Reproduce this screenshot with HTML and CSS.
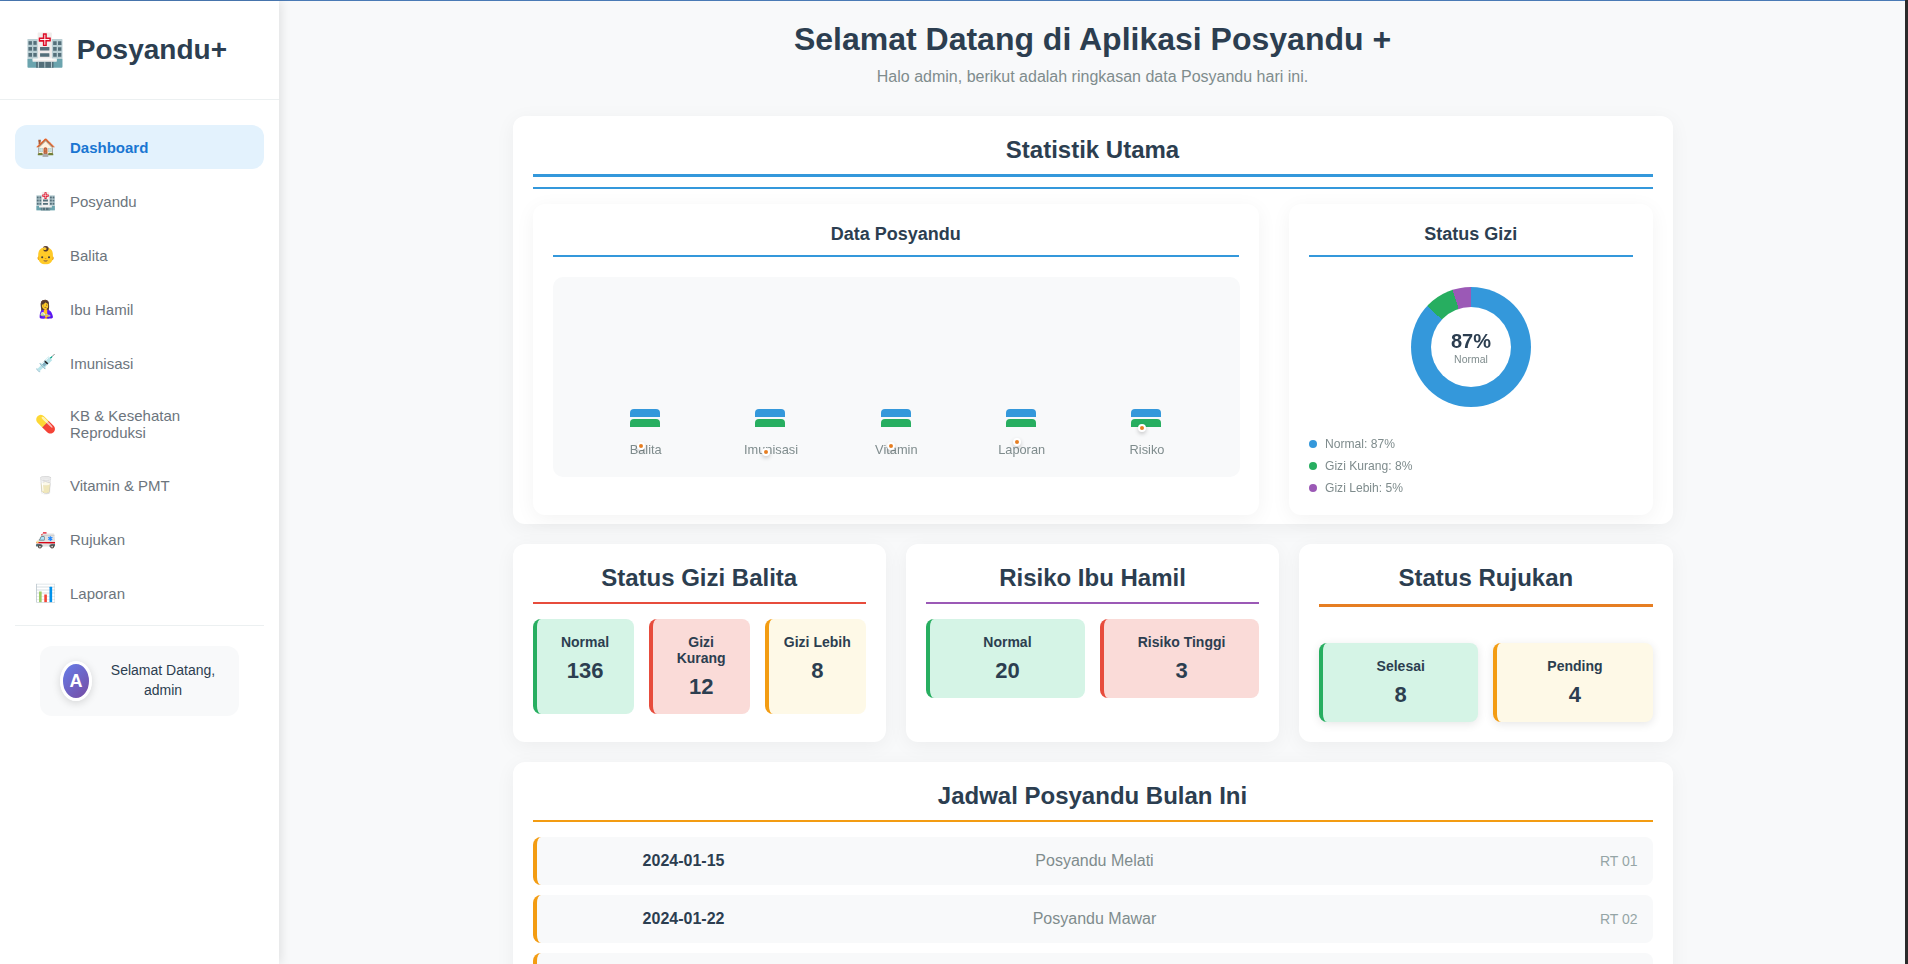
FILE: index.html

```html
<!DOCTYPE html>
<html lang="id">
<head>
  <meta charset="UTF-8">
  <meta name="viewport" content="width=device-width, initial-scale=1.0">
  <title>Dashboard | Posyandu+</title>
  <link rel="stylesheet" href="styles.css">
</head>
<body>
  <div class="page">
    <div class="top-line"></div>
    <div class="app">
      <aside class="sidebar">
        <div class="brand">
          <span class="brand-icon">🏥</span>
          <span class="brand-name">Posyandu+</span>
        </div>
        <nav class="nav">
          <a class="nav-item active"><span class="nav-icon">🏠</span><span>Dashboard</span></a>
          <a class="nav-item"><span class="nav-icon">🏥</span><span>Posyandu</span></a>
          <a class="nav-item"><span class="nav-icon">👶</span><span>Balita</span></a>
          <a class="nav-item"><span class="nav-icon">🤱</span><span>Ibu Hamil</span></a>
          <a class="nav-item"><span class="nav-icon">💉</span><span>Imunisasi</span></a>
          <a class="nav-item"><span class="nav-icon">💊</span><span>KB &amp; Kesehatan Reproduksi</span></a>
          <a class="nav-item"><span class="nav-icon">🥛</span><span>Vitamin &amp; PMT</span></a>
          <a class="nav-item"><span class="nav-icon">🚑</span><span>Rujukan</span></a>
          <a class="nav-item"><span class="nav-icon">📊</span><span>Laporan</span></a>
        </nav>
        <div class="user-wrap">
          <div class="user-card">
            <div class="avatar">A</div>
            <div class="user-text">Selamat Datang, admin</div>
          </div>
        </div>
      </aside>

      <main class="main">
        <div class="container">
          <header class="page-head">
            <h1>Selamat Datang di Aplikasi Posyandu +</h1>
            <p>Halo admin, berikut adalah ringkasan data Posyandu hari ini.</p>
          </header>

          <section class="card card-stats">
            <h2 class="title title-blue">Statistik Utama</h2>
            <div class="rule"></div>
            <div class="chart-grid">
              <div class="card inner">
                <h3 class="sub-title">Data Posyandu</h3>
                <div class="bar-chart">
                  <div class="bar-col"><div class="bar blue"></div><div class="bar green"></div><span class="bar-label">Balita</span></div>
                  <div class="bar-col"><div class="bar blue"></div><div class="bar green"></div><span class="bar-label">Imunisasi</span></div>
                  <div class="bar-col"><div class="bar blue"></div><div class="bar green"></div><span class="bar-label">Vitamin</span></div>
                  <div class="bar-col"><div class="bar blue"></div><div class="bar green"></div><span class="bar-label">Laporan</span></div>
                  <div class="bar-col"><div class="bar blue"></div><div class="bar green"></div><span class="bar-label">Risiko</span></div>
                  <span class="dot" style="left:88px;top:169px"></span>
                  <span class="dot" style="left:213px;top:175px"></span>
                  <span class="dot" style="left:338px;top:169px"></span>
                  <span class="dot" style="left:464px;top:165px"></span>
                  <span class="dot" style="left:589px;top:151px"></span>
                </div>
              </div>
              <div class="card inner">
                <h3 class="sub-title">Status Gizi</h3>
                <div class="donut">
                  <div class="donut-hole">
                    <strong>87%</strong>
                    <small>Normal</small>
                  </div>
                </div>
                <ul class="legend">
                  <li><i class="swatch blue"></i>Normal: 87%</li>
                  <li><i class="swatch green"></i>Gizi Kurang: 8%</li>
                  <li><i class="swatch purple"></i>Gizi Lebih: 5%</li>
                </ul>
              </div>
            </div>
          </section>

          <div class="three-col">
            <section class="card">
              <h2 class="title title-red">Status Gizi Balita</h2>
              <div class="stat-row cols-3">
                <div class="stat good"><span>Normal</span><b>136</b></div>
                <div class="stat bad"><span>Gizi Kurang</span><b>12</b></div>
                <div class="stat warn"><span>Gizi Lebih</span><b>8</b></div>
              </div>
            </section>
            <section class="card">
              <h2 class="title title-purple">Risiko Ibu Hamil</h2>
              <div class="stat-row cols-2">
                <div class="stat good"><span>Normal</span><b>20</b></div>
                <div class="stat bad"><span>Risiko Tinggi</span><b>3</b></div>
              </div>
            </section>
            <section class="card">
              <h2 class="title title-orange">Status Rujukan</h2>
              <div class="stat-row cols-2 raised">
                <div class="stat good"><span>Selesai</span><b>8</b></div>
                <div class="stat warn"><span>Pending</span><b>4</b></div>
              </div>
            </section>
          </div>

          <section class="card">
            <h2 class="title title-amber">Jadwal Posyandu Bulan Ini</h2>
            <div class="schedule">
              <div class="sched-row"><b>2024-01-15</b><span class="sched-name">Posyandu Melati</span><span class="sched-rt">RT 01</span></div>
              <div class="sched-row"><b>2024-01-22</b><span class="sched-name">Posyandu Mawar</span><span class="sched-rt">RT 02</span></div>
              <div class="sched-row"></div>
            </div>
          </section>
        </div>
      </main>
    </div>
  </div>
  <div class="edge"></div>
</body>
</html>
```

FILE: styles.css

```css
* {
  box-sizing: border-box;
}
body {
  margin: 0;
  height: 100vh;
  overflow: hidden;
  display: flex;
  font-family: "Liberation Sans", Arial, "Noto Color Emoji", sans-serif;
  background-color: #f8f9fa;
  color: #2c3e50;
}
.page {
  flex: 1;
  min-width: 0;
  display: flex;
  flex-direction: column;
}
.top-line {
  height: 1px;
  background: #4a7ab5;
}
.edge {
  width: 3px;
  background: #2b2b2b;
}
.app {
  flex: 1;
  min-height: 0;
  display: flex;
}

/* sidebar */
.sidebar {
  width: 279px;
  flex-shrink: 0;
  background: #fff;
  box-shadow: 2px 0 10px rgba(0,0,0,0.1);
  position: relative;
  z-index: 2;
}
.brand {
  height: 99px;
  padding: 0 25px;
  display: flex;
  align-items: center;
  gap: 12px;
  border-bottom: 1px solid #ecf0f1;
}
.brand-icon {
  font-size: 32px;
}
.brand-name {
  font-size: 28px;
  font-weight: bold;
}
.nav {
  padding: 25px 15px 10px;
  display: flex;
  flex-direction: column;
  gap: 10px;
}
.nav-item {
  display: flex;
  align-items: center;
  padding: 12px 20px;
  border-radius: 12px;
  font-size: 15px;
  line-height: 17px;
  color: #6c757d;
}
.nav-icon {
  width: 35px;
  height: 20px;
  flex-shrink: 0;
  font-size: 17px;
  line-height: 22px;
}
.nav-item.active {
  background: #e3f2fd;
  color: #1976d2;
  font-weight: bold;
}
.user-wrap {
  margin: 0 15px;
  padding: 20px 25px;
  border-top: 1px solid #ecf0f1;
}
.user-card {
  display: flex;
  align-items: center;
  gap: 15px;
  padding: 15px 20px;
  background: #f8f9fa;
  border-radius: 12px;
}
.avatar {
  width: 32px;
  height: 40px;
  flex-shrink: 0;
  display: flex;
  align-items: center;
  justify-content: center;
  border: 3px solid #fff;
  border-radius: 50%;
  background: linear-gradient(135deg, #667eea, #764ba2);
  box-shadow: 0 2px 8px rgba(0,0,0,0.15);
  color: #fff;
  font-size: 18px;
  font-weight: bold;
}
.user-text {
  flex: 1;
  margin-top: -2px;
  text-align: center;
  font-size: 14px;
  line-height: 20px;
}

/* main area */
.main {
  flex: 1;
  min-width: 0;
  overflow: hidden;
  padding: 20px 0 20px 1px;
}
.container {
  width: 1160px;
  margin: 0 auto;
}
.page-head {
  text-align: center;
  margin-bottom: 30px;
}
.page-head h1 {
  margin: 0 0 10px;
  font-size: 32px;
}
.page-head p {
  margin: 0;
  font-size: 16px;
  color: #7f8c8d;
}
.card {
  background: #fff;
  border-radius: 12px;
  padding: 20px;
  margin-bottom: 20px;
  box-shadow: 0 4px 20px rgba(0,0,0,0.05);
}
.card-stats {
  padding-bottom: 9px;
}
.title {
  margin: 0 0 15px;
  padding-bottom: 10px;
  font-size: 24px;
  line-height: 28px;
  text-align: center;
  border-bottom: 2px solid #3498db;
}
.title-blue {
  margin-bottom: 10px;
  border-bottom-width: 3px;
}
.title-red {
  border-bottom-color: #e74c3c;
}
.title-purple {
  border-bottom-color: #9b59b6;
}
.title-amber {
  border-bottom-color: #f39c12;
}
.title-orange {
  margin-bottom: 36px;
  padding-bottom: 12px;
  border-bottom: 3px solid #e67e22;
}
.rule {
  height: 2px;
  margin-bottom: 15px;
  background: #3498db;
}
.chart-grid {
  display: grid;
  grid-template-columns: 2fr 1fr;
  gap: 30px;
}
.inner {
  margin-bottom: 0;
}
.sub-title {
  margin: 0 0 20px;
  padding-bottom: 10px;
  font-size: 18px;
  line-height: 21px;
  text-align: center;
  border-bottom: 2px solid #3498db;
}

/* bars */
.bar-chart {
  position: relative;
  height: 200px;
  padding: 0 30px 19px;
  background: #f8f9fa;
  border-radius: 10px;
  display: grid;
  grid-template-columns: repeat(5, 1fr);
  align-items: end;
  will-change: transform;
}
.bar-col {
  display: flex;
  flex-direction: column;
  align-items: center;
  gap: 2px;
}
.bar {
  width: 30px;
  height: 8px;
  margin-right: 1px;
  border-radius: 4px 4px 0 0;
}
.blue {
  background: #3498db;
}
.green {
  background: #27ae60;
}
.purple {
  background: #9b59b6;
}
.bar-label {
  margin-top: 13px;
  font-size: 12.8px;
  line-height: 16px;
  color: #7f8c8d;
}
.dot {
  position: absolute;
  width: 8px;
  height: 8px;
  margin: -4px 0 0 -4px;
  background: #e67e22;
  border: 2px solid #fff;
  border-radius: 50%;
  box-shadow: 0 2px 4px rgba(0,0,0,0.2);
}

/* donut */
.donut {
  width: 120px;
  height: 120px;
  margin: 30px auto;
  border-radius: 50%;
  background: conic-gradient(#3498db 0 87%, #27ae60 87% 95%, #9b59b6 95% 100%);
  display: flex;
  align-items: center;
  justify-content: center;
  will-change: transform;
}
.donut-hole {
  width: 80px;
  height: 80px;
  background: #fff;
  border-radius: 50%;
  display: flex;
  flex-direction: column;
  align-items: center;
  justify-content: center;
}
.donut-hole strong {
  margin-top: 1px;
  font-size: 20px;
}
.donut-hole small {
  font-size: 10.5px;
  color: #7f8c8d;
}
.legend {
  margin: 0;
  padding: 0;
  list-style: none;
  display: flex;
  flex-direction: column;
  gap: 8px;
  font-size: 12.1px;
  line-height: 14px;
  color: #7f8c8d;
  will-change: transform;
}
.legend li {
  display: flex;
  align-items: center;
  gap: 8px;
}
.swatch {
  width: 8px;
  height: 8px;
  border-radius: 50%;
}

/* stat boxes */
.three-col {
  display: grid;
  grid-template-columns: repeat(3, 1fr);
  gap: 20px;
  margin-bottom: 20px;
}
.three-col .card {
  margin-bottom: 0;
}
.stat-row {
  display: grid;
  gap: 15px;
  margin-bottom: 8px;
}
.cols-3 {
  grid-template-columns: repeat(3, 1fr);
}
.cols-2 {
  grid-template-columns: repeat(2, 1fr);
}
.stat {
  padding: 15px;
  border-left: 4px solid;
  border-radius: 8px;
  text-align: center;
}
.stat span {
  display: block;
  font-size: 14px;
  line-height: 16px;
  font-weight: bold;
}
.stat b {
  display: block;
  margin-top: 8px;
  font-size: 22px;
  line-height: 25px;
}
.good {
  background: #d5f4e6;
  border-left-color: #27ae60;
}
.bad {
  background: #fadbd8;
  border-left-color: #e74c3c;
}
.warn {
  background: #fef9e7;
  border-left-color: #f39c12;
}
.raised {
  margin-bottom: 0;
}
.raised .stat {
  box-shadow: 0 2px 10px rgba(0,0,0,0.1);
}

/* schedule */
.schedule {
  display: flex;
  flex-direction: column;
  gap: 10px;
}
.sched-row {
  display: grid;
  grid-template-columns: 1fr 2fr 1fr;
  gap: 15px;
  min-height: 48px;
  padding: 15px;
  background: #f8f9fa;
  border-left: 4px solid #f39c12;
  border-radius: 8px;
  font-size: 16px;
  line-height: 18px;
  text-align: center;
}
.sched-name {
  color: #7f8c8d;
}
.sched-rt {
  text-align: right;
  font-size: 14px;
  color: #95a5a6;
}
```
